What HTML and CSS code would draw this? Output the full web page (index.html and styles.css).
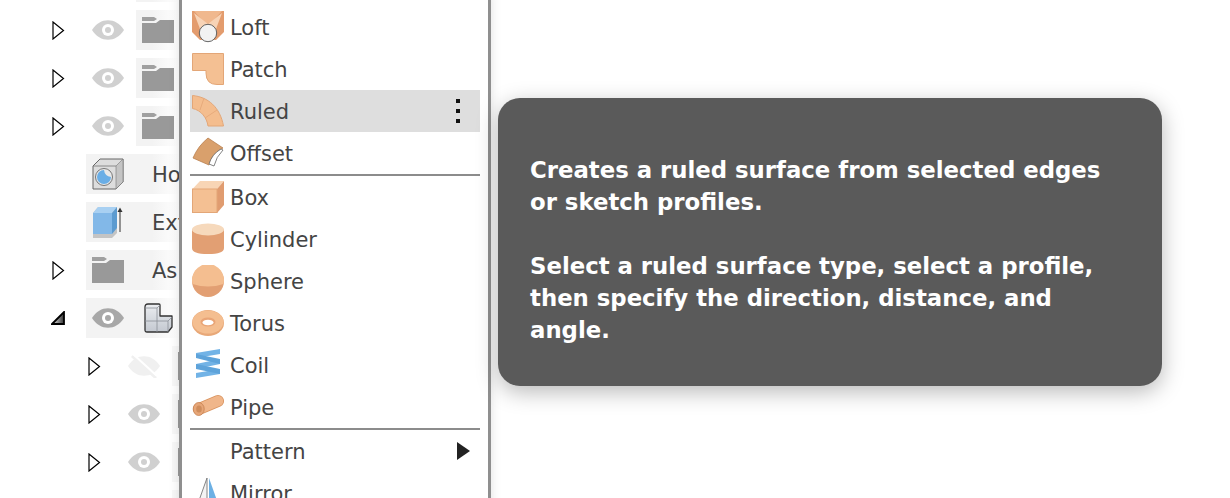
FILE: index.html
```html
<!DOCTYPE html>
<html lang="en">
<head>
<meta charset="utf-8">
<title>Ruled surface menu</title>
<link rel="stylesheet" href="styles.css">
</head>
<body>
<svg class="defs" width="0" height="0" aria-hidden="true">
  <symbol id="tri" viewBox="0 0 13 19"><path d="M1 1 L11.500 9.500 L1 18 Z" fill="#fff" stroke="#000" stroke-width="1.200"/></symbol>
  <symbol id="eye" viewBox="0 0 32 20"><path d="M0 10 C8 -3 24 -3 32 10 C24 23 8 23 0 10 Z" fill="currentColor"/><circle cx="16" cy="10" r="6" fill="#fff"/><circle cx="16" cy="10" r="3" fill="currentColor"/></symbol>
  <symbol id="folder" viewBox="0 0 32 26"><path d="M0 0 H12 L15 2 L12 4 H0 Z" fill="#a0a0a0"/><path d="M0 6 H14 L18 3 H32 V26 H0 Z" fill="#999"/></symbol>
  <linearGradient id="partfill" x1="0" y1="0" x2="0" y2="1"><stop offset="0" stop-color="#eceef1"/><stop offset="1" stop-color="#c3c8d0"/></linearGradient>
</svg>

<main class="tree">
  <div class="row sliver"><span class="box box-c"></span></div>
  <div class="row row-top">
    <svg class="tri"><use href="#tri"/></svg><svg class="eye"><use href="#eye"/></svg>
    <span class="box box-c"><svg class="folder"><use href="#folder"/></svg></span>
  </div>
  <div class="row row-top">
    <svg class="tri"><use href="#tri"/></svg><svg class="eye"><use href="#eye"/></svg>
    <span class="box box-c"><svg class="folder"><use href="#folder"/></svg></span>
  </div>
  <div class="row row-top">
    <svg class="tri"><use href="#tri"/></svg><svg class="eye"><use href="#eye"/></svg>
    <span class="box box-c"><svg class="folder"><use href="#folder"/></svg></span>
  </div>
  <div class="row row-top no-tri">
    <span class="box box-w">
      <svg class="icon32" viewBox="0 0 32 32"><path d="M1 8 L8 1 H31 V24 L24 31 H1 Z" fill="#ddd" stroke="#666" stroke-width="1"/><path d="M24 31 V8 L31 1 V24 Z" fill="#c4c4c4" stroke="#777" stroke-width=".6"/><path d="M1 8 H24" stroke="#777" stroke-width=".8"/><circle cx="12" cy="19" r="8.500" fill="#e8e8e8" stroke="#777"/><path d="M12 12 A7 7 0 1 0 19 19 A8 8 0 0 1 12 12 Z" fill="#6aaee6"/></svg>
      <span class="label">Ho</span>
    </span>
  </div>
  <div class="row row-top no-tri">
    <span class="box box-w">
      <svg class="icon32" viewBox="0 0 32 32"><path d="M1 7 L6 1 H25 V27 L20 32 H1 Z" fill="#c4c4c4"/><path d="M1 7 L6 1 H25 L20 7 Z" fill="#a8d0f2"/><path d="M20 7 L25 1 V22 L20 28 Z" fill="#5c9bd0"/><rect x="1" y="7" width="19" height="21" fill="#82b8e8"/><path d="M28 5 V26" stroke="#333" stroke-width="1"/><path d="M25.500 6 L28 1.500 L30.500 6 Z" fill="#333"/></svg>
      <span class="label">Ext</span>
    </span>
  </div>
  <div class="row row-top">
    <svg class="tri"><use href="#tri"/></svg>
    <span class="box box-as">
      <svg class="folder"><use href="#folder"/></svg>
      <span class="label">As</span>
    </span>
  </div>
  <div class="row row-top">
    <svg class="tri-open" viewBox="0 0 14 14"><defs><linearGradient id="tg" x1="0" y1="0" x2="1" y2="0"><stop offset="0" stop-color="#eee"/><stop offset="1" stop-color="#333"/></linearGradient></defs><path d="M1 13 L13 1 V13 Z" fill="url(#tg)" stroke="#000" stroke-width="1.800"/></svg>
    <span class="box box-part">
      <svg class="eye eye-dark"><use href="#eye"/></svg>
      <svg class="part" viewBox="0 0 29 30"><path d="M1 4 Q1 1 4 1 H15 Q16 1 16 2 V13 H24 L28 13 V24 L24 29 H3 Q1 29 1 27 Z" fill="url(#partfill)" stroke="#333" stroke-width="1.300" stroke-linejoin="round"/><path d="M1 5 H13 L16 2 M13 5 V29 M1 18 H24 L28 14 M24 18 V29" fill="none" stroke="#8a8f98" stroke-width=".8"/></svg>
    </span>
  </div>
  <div class="row row-sub">
    <svg class="tri"><use href="#tri"/></svg>
    <svg class="eye eye-off" viewBox="0 0 32 24"><path d="M0 12 C8 -1 24 -1 32 12 C24 25 8 25 0 12 Z" fill="#f0f0f0"/><path d="M4 2 L28 24" stroke="#f0f0f0" stroke-width="3"/><path d="M5 0 L29 22" stroke="#fff" stroke-width="2"/></svg>
    <span class="box box-sub"><i class="stub"></i></span>
  </div>
  <div class="row row-sub">
    <svg class="tri"><use href="#tri"/></svg><svg class="eye"><use href="#eye"/></svg>
    <span class="box box-sub"><i class="stub"></i></span>
  </div>
  <div class="row row-sub">
    <svg class="tri"><use href="#tri"/></svg><svg class="eye"><use href="#eye"/></svg>
    <span class="box box-sub"><i class="stub"></i></span>
  </div>
  <div class="row row-sub no-vis"><span class="box box-sub"></span></div>
</main>

<nav class="menu">
  <div class="item"><svg class="micon" viewBox="0 0 32 32"><path d="M0 0 H32 V21 L24 29 H8 L0 21 Z" fill="#e39c6e"/><path d="M2 0 H30 L18 13 H14 Z" fill="#f0b88e"/><path d="M2 2 L16 13 L8 18 Z M30 2 L16 13 L24 18 Z" fill="#f7d3b6"/><circle cx="16" cy="22" r="8.700" fill="#f2f2f2" stroke="#555" stroke-width=".9"/></svg><span>Loft</span></div>
  <div class="item"><svg class="micon" viewBox="0 0 32 32"><path d="M.5 .5 H31.500 V31.500 H25 Q14 31.500 14 20 V17.500 H.5 Z" fill="#f4c093" stroke="#e3a677"/></svg><span>Patch</span></div>
  <div class="item is-hover"><svg class="micon" viewBox="0 0 32 32"><path d="M.5 .5 C16 2 28 12 31.500 31 H16 C15 23 9 15 .5 13.500 Z" fill="#f4bd8e" stroke="#e3a677"/><path d="M12 3 L8 15 M25 15 L13 23" stroke="#e8ab7c"/></svg><span>Ruled</span><b class="dots"><i></i><i></i><i></i></b></div>
  <div class="item"><svg class="micon" viewBox="0 0 32 32"><path d="M16 1 L31 11 Q20 16 17 28 L1 21 Q6 9 16 1 Z" fill="#d9a06c" stroke="#b97f4e" stroke-width=".8"/><path d="M29 12 Q20 17 17 27 L22 29 Q24 20 31 13 Z" fill="#fff" stroke="#666" stroke-width=".8"/></svg><span>Offset</span></div>
  <hr class="sep">
  <div class="item"><svg class="micon" viewBox="0 0 32 32"><path d="M8 0 H32 L25 8 H.5 Z" fill="#f8d5b5"/><path d="M25 8 L32 0 V24 L25 32 Z" fill="#e09c70"/><rect x=".5" y="8" width="24.500" height="23.500" fill="#f4c093" stroke="#e3a677"/></svg><span>Box</span></div>
  <div class="item"><svg class="micon" viewBox="0 0 32 32"><path d="M0 6 V25 Q0 31 16 31 Q32 31 32 25 V6 Z" fill="#e29f73"/><ellipse cx="16" cy="6.500" rx="16" ry="6" fill="#f6d9bc"/></svg><span>Cylinder</span></div>
  <div class="item"><svg class="micon" viewBox="0 0 32 32"><circle cx="16" cy="16" r="16" fill="#e29f73"/><path d="M.5 19 A16 16 0 1 1 31.500 19 Q16 24 .5 19 Z" fill="#f4be90"/></svg><span>Sphere</span></div>
  <div class="item"><svg class="micon" viewBox="0 0 32 32"><ellipse cx="16" cy="16" rx="16" ry="13" fill="#e8a878"/><ellipse cx="16" cy="15" rx="15.500" ry="11.500" fill="#f4be90"/><ellipse cx="16" cy="15" rx="7.500" ry="4.500" fill="#e9a577"/><ellipse cx="16" cy="15.500" rx="5.500" ry="2.800" fill="#fff"/></svg><span>Torus</span></div>
  <div class="item"><svg class="micon" viewBox="0 0 32 32"><path d="M4 4 L28 0 V5 L4 9 Z M28 10 V15 L4 20 V15 Z M28 20 V25 L4 29 V24 Z" fill="#72b3e6"/><path d="M4 5 L28 10 V15 L4 9 Z M4 15 L28 20 V25 L4 20 Z" fill="#5ea3da"/></svg><span>Coil</span></div>
  <div class="item"><svg class="micon" viewBox="0 0 32 32"><path d="M7 18 L26 10" stroke="#d9935f" stroke-width="12" stroke-linecap="round"/><path d="M7 18 L26 10" stroke="#f0b68a" stroke-width="10.500" stroke-linecap="round"/><ellipse cx="6.700" cy="18" rx="5.500" ry="6.500" fill="#e6a678" stroke="#c58050" stroke-width=".8"/><ellipse cx="7" cy="18" rx="2.800" ry="3.500" fill="#cf8d5c"/></svg><span>Pipe</span></div>
  <hr class="sep">
  <div class="item"><i class="micon"></i><span>Pattern</span><b class="arrow"></b></div>
  <div class="item"><svg class="micon" viewBox="0 0 32 32"><path d="M15 1 L4 32 H15 Z" fill="#f4f4f4" stroke="#777" stroke-width=".9"/><path d="M17 1 L28 32 H17 Z" fill="#6cb0e4"/></svg><span>Mirror</span></div>
</nav>

<aside class="tip">
  <p>Creates a ruled surface from selected edges<br>or sketch profiles.</p>
  <p>Select a ruled surface type, select a profile,<br>then specify the direction, distance, and<br>angle.</p>
</aside>
</body>
</html>
```

FILE: styles.css
```css
html, body { margin: 0; height: 100%; }
body {
  position: relative;
  width: 1230px;
  height: 498px;
  overflow: hidden;
  background: #fff;
  font-family: "DejaVu Sans", sans-serif;
  color: #444;
}
.defs { position: absolute; }

/* Tree */
.tree { display: flex; flex-direction: column; gap: 8px; margin-top: -38px; }
.row { display: flex; align-items: center; height: 40px; flex: none; padding-left: 52px; }
.sliver { padding-left: 136px; }
.row-sub { padding-left: 88px; }
.no-tri { padding-left: 86px; }
.no-vis { padding-left: 172px; }
.tri { width: 13px; height: 19px; flex: none; }
.row-sub .tri { margin-right: 27px; }
.row-top .tri { margin-right: 27px; }
.eye { width: 32px; height: 20px; flex: none; color: #d0d0d0; }
.eye-dark { color: #a8a8a8; }
.eye-off { height: 24px; }
.box {
  display: flex;
  align-items: center;
  height: 40px;
  flex: none;
  box-sizing: border-box;
  padding-left: 6px;
  background: linear-gradient(to right, #f3f3f3 calc(100% - 28px), #fff 100%);
}
.box-c { margin-left: 12px; width: 44px; }
.sliver .box-c { margin-left: 0; }
.box-w { width: 94px; }
.box-as { margin-left: -6px; width: 94px; }
.box-part { width: 94px; }
.box-sub { margin-left: 12px; width: 8px; background: #f8f8f8; }
.no-vis .box-sub { margin-left: 0; }
.folder { width: 32px; height: 26px; flex: none; }
.icon32 { width: 32px; height: 32px; flex: none; }
.part { width: 29px; height: 30px; margin-left: 20px; flex: none; }
.tri-open { width: 14px; height: 14px; flex: none; margin-left: -1px; margin-right: 21px; }
.label { margin: 2px 0 0 28px; font-size: 21px; line-height: 40px; color: #444; white-space: nowrap; }
.stub { display: block; width: 2px; height: 28px; background: #999; }

/* Menu */
.menu {
  position: absolute;
  left: 179px;
  top: -8px;
  width: 312px;
  height: 530px;
  box-sizing: border-box;
  padding: 14px 8px 0;
  background: #fff;
  border-left: 3px solid #8f8f8f;
  border-right: 3px solid #8f8f8f;
  box-shadow: 0 0 10px rgba(0,0,0,.12);
}
.item { display: flex; align-items: center; height: 42px; padding-left: 2px; font-size: 21px; }
.item span { margin: 2px 0 0 6px; }
.micon { display: block; width: 32px; height: 32px; flex: none; }
.is-hover { background: #dedede; }
.dots { margin-left: auto; margin-right: 20px; display: flex; flex-direction: column; gap: 6px; }
.dots i { display: block; width: 4px; height: 4px; background: #111; }
.arrow { margin-left: auto; margin-right: 10px; width: 0; height: 0; border-left: 13px solid #222; border-top: 9px solid transparent; border-bottom: 9px solid transparent; }
.sep { height: 2px; margin: 0; border: 0; background: #8c8c8c; }

/* Tooltip */
.tip {
  position: absolute;
  left: 498px;
  top: 98px;
  width: 664px;
  height: 288px;
  box-sizing: border-box;
  padding: 56px 32px 0;
  background: #5a5a5a;
  border-radius: 22px;
  box-shadow: 0 6px 22px rgba(0,0,0,.28);
  color: #fff;
  font-size: 22.800px;
  font-weight: 700;
  line-height: 32px;
}
.tip p { margin: 0 0 32px; white-space: nowrap; }
```
